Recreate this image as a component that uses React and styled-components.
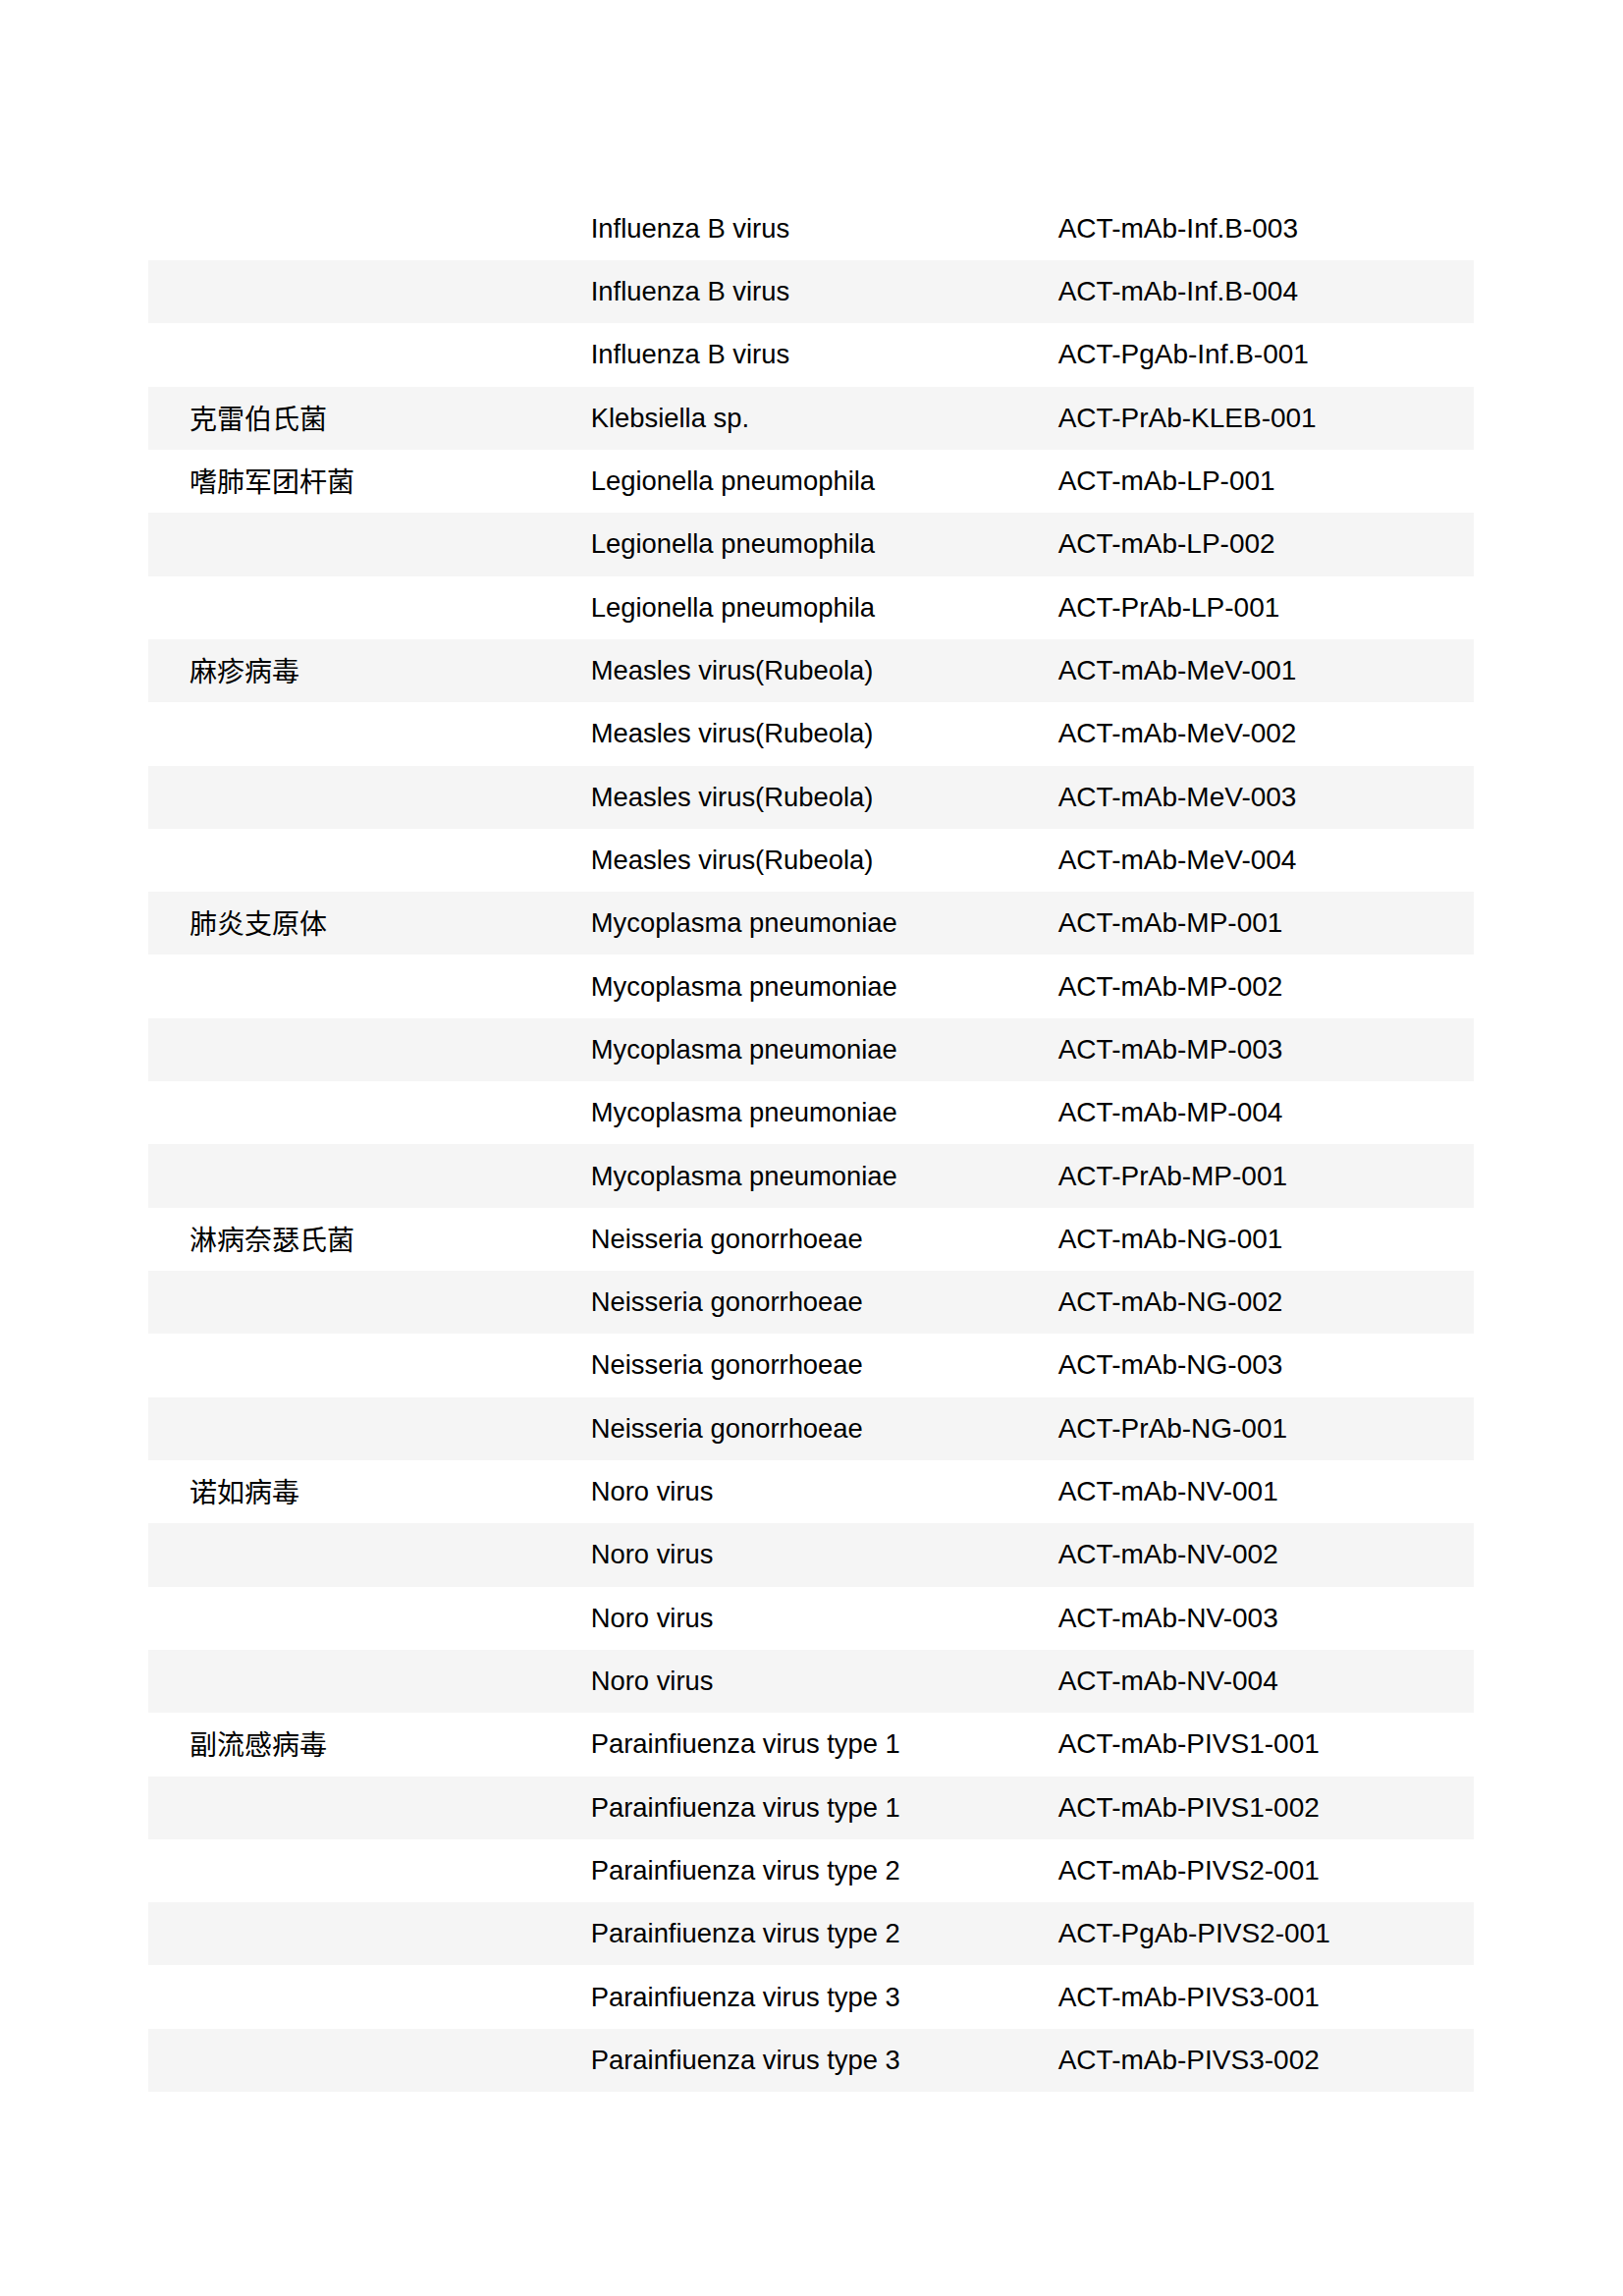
import React from "react";
import styled, { createGlobalStyle } from "styled-components";

const GlobalStyle = createGlobalStyle`
  html, body { margin: 0; padding: 0; background: #ffffff; }
  body {
    font-family: "Liberation Sans", Arial, "Noto Sans CJK SC", sans-serif;
    color: #000000;
  }
`;

const Page = styled.div`
  width: 1653px;
  min-height: 2338px;
  box-sizing: border-box;
  padding: 200.7px 152px 0 151px;
`;

const Table = styled.div`
  width: 1350px;
  display: flex;
  flex-direction: column;
`;

const Row = styled.div`
  display: grid;
  grid-template-columns: 408.7px 476px 1fr;
  height: 64.32px;
  align-items: center;
  padding-left: 42px;
  background: ${(p) => (p.$striped ? "#f5f5f5" : "#ffffff")};
  box-sizing: border-box;
`;

const Cell = styled.div`
  font-family: ${(p) =>
    p.$cjk
      ? `"Noto Sans CJK SC", "Liberation Sans", sans-serif`
      : `"Liberation Sans", Arial, "Noto Sans CJK SC", sans-serif`};
  font-size: ${(p) => p.$size || "28px"};
  line-height: 32px;
  white-space: nowrap;
  position: relative;
  top: ${(p) => (p.$cjk ? "-1px" : "0")};
`;

const rows = [
  ["", "Influenza B virus", "ACT-mAb-Inf.B-003"],
  ["", "Influenza B virus", "ACT-mAb-Inf.B-004"],
  ["", "Influenza B virus", "ACT-PgAb-Inf.B-001"],
  ["克雷伯氏菌", "Klebsiella sp.", "ACT-PrAb-KLEB-001"],
  ["嗜肺军团杆菌", "Legionella pneumophila", "ACT-mAb-LP-001"],
  ["", "Legionella pneumophila", "ACT-mAb-LP-002"],
  ["", "Legionella pneumophila", "ACT-PrAb-LP-001"],
  ["麻疹病毒", "Measles virus(Rubeola)", "ACT-mAb-MeV-001"],
  ["", "Measles virus(Rubeola)", "ACT-mAb-MeV-002"],
  ["", "Measles virus(Rubeola)", "ACT-mAb-MeV-003"],
  ["", "Measles virus(Rubeola)", "ACT-mAb-MeV-004"],
  ["肺炎支原体", "Mycoplasma pneumoniae", "ACT-mAb-MP-001"],
  ["", "Mycoplasma pneumoniae", "ACT-mAb-MP-002"],
  ["", "Mycoplasma pneumoniae", "ACT-mAb-MP-003"],
  ["", "Mycoplasma pneumoniae", "ACT-mAb-MP-004"],
  ["", "Mycoplasma pneumoniae", "ACT-PrAb-MP-001"],
  ["淋病奈瑟氏菌", "Neisseria gonorrhoeae", "ACT-mAb-NG-001"],
  ["", "Neisseria gonorrhoeae", "ACT-mAb-NG-002"],
  ["", "Neisseria gonorrhoeae", "ACT-mAb-NG-003"],
  ["", "Neisseria gonorrhoeae", "ACT-PrAb-NG-001"],
  ["诺如病毒", "Noro virus", "ACT-mAb-NV-001"],
  ["", "Noro virus", "ACT-mAb-NV-002"],
  ["", "Noro virus", "ACT-mAb-NV-003"],
  ["", "Noro virus", "ACT-mAb-NV-004"],
  ["副流感病毒", "Parainfiuenza virus type 1", "ACT-mAb-PIVS1-001"],
  ["", "Parainfiuenza virus type 1", "ACT-mAb-PIVS1-002"],
  ["", "Parainfiuenza virus type 2", "ACT-mAb-PIVS2-001"],
  ["", "Parainfiuenza virus type 2", "ACT-PgAb-PIVS2-001"],
  ["", "Parainfiuenza virus type 3", "ACT-mAb-PIVS3-001"],
  ["", "Parainfiuenza virus type 3", "ACT-mAb-PIVS3-002"],
];

export default function App() {
  return (
    <>
      <GlobalStyle />
      <Page>
        <Table>
          {rows.map(([cn, name, code], i) => (
            <Row key={i} $striped={i % 2 === 1}>
              <Cell $cjk>{cn}</Cell>
              <Cell $size="27.4px">{name}</Cell>
              <Cell>{code}</Cell>
            </Row>
          ))}
        </Table>
      </Page>
    </>
  );
}
